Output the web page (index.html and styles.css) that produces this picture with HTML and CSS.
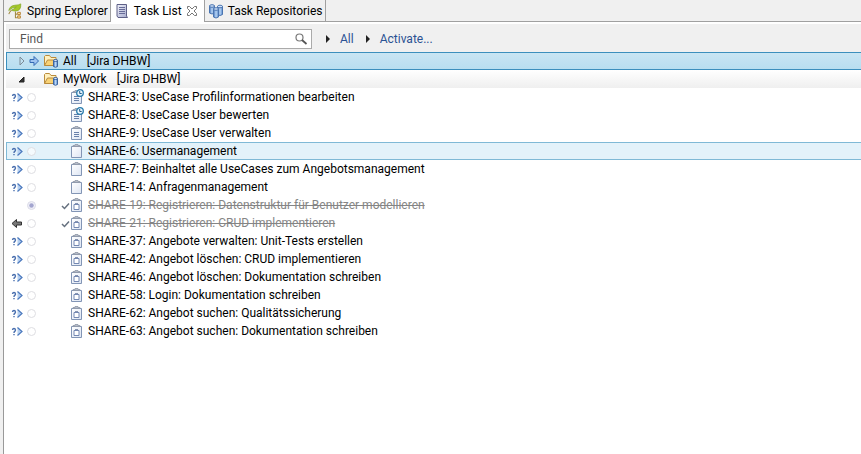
FILE: index.html
```html
<!DOCTYPE html>
<html lang="de">
<head>
<meta charset="utf-8">
<title>Task List</title>
<link rel="stylesheet" href="styles.css">
</head>
<body>
<svg class="defs" aria-hidden="true">
  <defs>
    <linearGradient id="blue" x1="0" y1="0" x2="1" y2="0"><stop offset="0" stop-color="#3f72bd"/><stop offset=".5" stop-color="#b9d6f5"/><stop offset="1" stop-color="#5b8bcd"/></linearGradient>
    <linearGradient id="paper" x1="0" y1="0" x2="1" y2="1"><stop offset="0" stop-color="#fff"/><stop offset="1" stop-color="#dde5f3"/></linearGradient>
    <linearGradient id="violet" x1="0" y1="0" x2="1" y2="1"><stop offset="0" stop-color="#f2f3fb"/><stop offset="1" stop-color="#a3a8cb"/></linearGradient>
    <symbol id="incoming" viewBox="0 0 12 12">
      <path d="M1.500 5Q1.700 3.500 3 3.500T4.500 5Q4.500 6 3.500 6.500Q3 7 3 8M3 9v1.300" fill="none" stroke="#4a6fae" stroke-width="1.400"/>
      <path d="M6.500 2.500L11 6.500l-4.500 4Z" fill="#b5cff0"/>
      <path d="M6.500 2.500L11 6.500l-4.500 4" fill="none" stroke="#4a78bd" stroke-width="1.200"/>
    </symbol>
    <symbol id="outgoing" viewBox="0 0 12 12">
      <path d="M1 6.500l4.500-4v2.500h5v3h-5v2.500Z" fill="#777" stroke="#333"/>
    </symbol>
    <symbol id="dot" viewBox="0 0 12 12"><circle cx="5.500" cy="6.500" r="4" fill="#fff" fill-opacity=".6" stroke="#dedee2"/></symbol>
    <symbol id="dot-on" viewBox="0 0 12 12"><circle cx="5.500" cy="6.500" r="4" fill="#f0f0f8" stroke="#dcdce8"/><circle cx="5.500" cy="6.500" r="2.200" fill="#a3a5cf"/></symbol>
    <symbol id="check" viewBox="0 0 9 12"><path d="M1 7l2.500 2.500L8 4.500" fill="none" stroke="#66717f" stroke-width="1.500"/></symbol>
    <symbol id="task" viewBox="0 0 14 16">
      <path d="M1.500 3.500h10v11h-10Z" fill="url(#paper)" stroke="#8295b5"/>
      <path d="M3 3.500v-1h2v-1h3v1h2v1Z" fill="#b9bec8" stroke="#8e98a8" stroke-width=".8"/>
    </symbol>
    <symbol id="story" viewBox="0 0 14 16">
      <use href="#task"/><path d="M4 7.500h5M4 9.500h5M4 11.500h5" stroke="#6880aa"/>
    </symbol>
    <symbol id="due" viewBox="0 0 14 16">
      <use href="#story"/><circle cx="10" cy="4" r="3.300" fill="#e7f4fc" stroke="#287bad" stroke-width="1.300"/><path d="M9.700 2v2.500h2" fill="none" stroke="#245d8a"/>
    </symbol>
    <symbol id="subtask" viewBox="0 0 14 16">
      <use href="#task"/><path d="M4 7.500h5v5H4Z" fill="#fff" stroke="#7488b2"/><path d="M5 6.500h3" stroke="#8794b0"/>
    </symbol>
    <symbol id="folder" viewBox="0 0 16 16">
      <path d="M1.500 12.500v-9l1-1h4l1.500 2h5v3" fill="#fff0bd" stroke="#b98b3c"/>
      <path d="M1.500 12.500l3-5.500h10l-2.500 5.500Z" fill="#f8d276" stroke="#b98b3c"/>
      <path d="M10.500 7.500v6q2 1.500 4 0v-6Z" fill="url(#blue)" stroke="#3d65a0"/><ellipse cx="12.500" cy="7.500" rx="2" ry="1" fill="#d5e6fb" stroke="#3d65a0"/>
    </symbol>
    <symbol id="arrow" viewBox="0 0 12 12"><path d="M2 4.500h4v-3l4.500 4.500-4.500 4.500v-3h-4Z" fill="#9fc4f0" stroke="#3369b3"/></symbol>
    <symbol id="closed" viewBox="0 0 10 12"><path d="M3 2l4 4-4 4Z" fill="none" stroke="#7d8b96"/></symbol>
    <symbol id="open" viewBox="0 0 10 12"><path d="M7 4v5H2Z" fill="#333" stroke="#222"/></symbol>
    <symbol id="spring" viewBox="0 0 16 18">
      <path d="M1 8.500Q2 3 8 2.500Q12 2.500 14.500 1Q15 9 8.500 9Q5 9 4 8Q7 7 9.500 4.500Q4 5 1 8.500Z" fill="#a5c928" stroke="#80a524" stroke-width=".8"/>
      <path d="M4 8Q2 10 1 12.500M8.500 9.500v7h2M8.500 12.500h2" fill="none" stroke="#a08a45" stroke-width="1.200"/>
      <path d="M11 10.500h3v2.500h-3ZM11 14.500h3v2.500h-3Z" fill="#ffe6a0" stroke="#b17a28"/>
    </symbol>
    <symbol id="list" viewBox="0 0 14 16">
      <path d="M2 1.500h9.500v11.500l1 1.500H3L2 13Z" fill="url(#violet)" stroke="#5e6087"/>
      <path d="M4 4.500h6M4 6.500h6M4 8.500h6M4 10.500h6" stroke="#686c98"/>
    </symbol>
    <symbol id="close" viewBox="0 0 12 12"><path d="M1.500 1.500h2L6 4l2.500-2.500h2v2L8 6l2.500 2.500v2h-2L6 8l-2.500 2.500h-2v-2L4 6 1.500 3.500Z" fill="#fff" stroke="#777"/></symbol>
    <symbol id="repos" viewBox="0 0 16 16">
      <g fill="url(#blue)" stroke="#4a74b0">
        <path d="M1.500 3v7q2.500 2 5 0V3Z"/><ellipse cx="4" cy="3" rx="2.500" ry="1.300" fill="#cfe1f8"/>
        <path d="M9.500 3.500v8q2.500 2 5 0v-8Z"/><ellipse cx="12" cy="3.500" rx="2.500" ry="1.300" fill="#cfe1f8"/>
        <path d="M5.500 6v8q2.500 2 5 0V6Z"/><ellipse cx="8" cy="6" rx="2.500" ry="1.300" fill="#cfe1f8"/>
      </g>
    </symbol>
    <symbol id="search" viewBox="0 0 14 14"><circle cx="5.500" cy="5.500" r="3.500" fill="#fff" stroke="#777" stroke-width="1.200"/><path d="M8 8l4.500 4" stroke="#555" stroke-width="1.700"/></symbol>
    <symbol id="tri" viewBox="0 0 6 10"><path d="M1 1l4 4-4 4Z" fill="#222"/></symbol>
  </defs>
</svg>
<div class="view">
  <nav class="tabs">
    <button class="tab"><svg class="icon16"><use href="#spring"/></svg>Spring Explorer</button>
    <button class="tab active"><svg class="icon16"><use href="#list"/></svg>Task List<svg class="icon12 close"><use href="#close"/></svg></button>
    <button class="tab"><svg class="icon16"><use href="#repos"/></svg>Task Repositories</button>
  </nav>
  <main class="panel">
    <form class="toolbar">
      <label class="find"><input type="text" placeholder="Find" aria-label="Find"><svg class="icon14"><use href="#search"/></svg></label>
      <svg class="tri"><use href="#tri"/></svg><a href="#">All</a>
      <svg class="tri"><use href="#tri"/></svg><a href="#">Activate...</a>
    </form>
    <ul class="tree">
      <li class="group selected"><svg class="twist"><use href="#closed"/></svg><svg class="icon12"><use href="#arrow"/></svg><svg class="icon16"><use href="#folder"/></svg><span>All</span><span>[Jira DHBW]</span></li>
      <li class="group"><svg class="twist"><use href="#open"/></svg><i class="icon12"></i><svg class="icon16"><use href="#folder"/></svg><span>MyWork</span><span>[Jira DHBW]</span></li>
      <li class="task"><svg class="icon12"><use href="#incoming"/></svg><svg class="icon12"><use href="#dot"/></svg><i></i><svg class="doc"><use href="#due"/></svg><span>SHARE-3: UseCase Profilinformationen bearbeiten</span></li>
      <li class="task"><svg class="icon12"><use href="#incoming"/></svg><svg class="icon12"><use href="#dot"/></svg><i></i><svg class="doc"><use href="#due"/></svg><span>SHARE-8: UseCase User bewerten</span></li>
      <li class="task"><svg class="icon12"><use href="#incoming"/></svg><svg class="icon12"><use href="#dot"/></svg><i></i><svg class="doc"><use href="#story"/></svg><span>SHARE-9: UseCase User verwalten</span></li>
      <li class="task hover"><svg class="icon12"><use href="#incoming"/></svg><svg class="icon12"><use href="#dot"/></svg><i></i><svg class="doc"><use href="#task"/></svg><span>SHARE-6: Usermanagement</span></li>
      <li class="task"><svg class="icon12"><use href="#incoming"/></svg><svg class="icon12"><use href="#dot"/></svg><i></i><svg class="doc"><use href="#task"/></svg><span>SHARE-7: Beinhaltet alle UseCases zum Angebotsmanagement</span></li>
      <li class="task"><svg class="icon12"><use href="#incoming"/></svg><svg class="icon12"><use href="#dot"/></svg><i></i><svg class="doc"><use href="#task"/></svg><span>SHARE-14: Anfragenmanagement</span></li>
      <li class="task done"><i></i><svg class="icon12"><use href="#dot-on"/></svg><svg class="check"><use href="#check"/></svg><svg class="doc"><use href="#subtask"/></svg><span>SHARE-19: Registrieren: Datenstruktur für Benutzer modellieren</span></li>
      <li class="task done"><svg class="icon12"><use href="#outgoing"/></svg><svg class="icon12"><use href="#dot"/></svg><svg class="check"><use href="#check"/></svg><svg class="doc"><use href="#subtask"/></svg><span>SHARE-21: Registrieren: CRUD implementieren</span></li>
      <li class="task"><svg class="icon12"><use href="#incoming"/></svg><svg class="icon12"><use href="#dot"/></svg><i></i><svg class="doc"><use href="#subtask"/></svg><span>SHARE-37: Angebote verwalten: Unit-Tests erstellen</span></li>
      <li class="task"><svg class="icon12"><use href="#incoming"/></svg><svg class="icon12"><use href="#dot"/></svg><i></i><svg class="doc"><use href="#subtask"/></svg><span>SHARE-42: Angebot löschen: CRUD implementieren</span></li>
      <li class="task"><svg class="icon12"><use href="#incoming"/></svg><svg class="icon12"><use href="#dot"/></svg><i></i><svg class="doc"><use href="#subtask"/></svg><span>SHARE-46: Angebot löschen: Dokumentation schreiben</span></li>
      <li class="task"><svg class="icon12"><use href="#incoming"/></svg><svg class="icon12"><use href="#dot"/></svg><i></i><svg class="doc"><use href="#subtask"/></svg><span>SHARE-58: Login: Dokumentation schreiben</span></li>
      <li class="task"><svg class="icon12"><use href="#incoming"/></svg><svg class="icon12"><use href="#dot"/></svg><i></i><svg class="doc"><use href="#subtask"/></svg><span>SHARE-62: Angebot suchen: Qualitätssicherung</span></li>
      <li class="task"><svg class="icon12"><use href="#incoming"/></svg><svg class="icon12"><use href="#dot"/></svg><i></i><svg class="doc"><use href="#subtask"/></svg><span>SHARE-63: Angebot suchen: Dokumentation schreiben</span></li>
    </ul>
  </main>
</div>
</body>
</html>
```
FILE: styles.css
```css
* { box-sizing: border-box; }
body {
  margin: 0;
  background: #f0f0f0;
  color: #000;
  font: 12px/18px Roboto, "Open Sans", sans-serif;
}
svg { display: block; flex: none; }
.defs { position: absolute; width: 0; height: 0; }
.icon12 { width: 12px; height: 12px; }
.icon14 { width: 14px; height: 14px; }
.icon16 { width: 16px; height: 16px; }

.view {
  display: flex;
  flex-direction: column;
  min-height: 100vh;
  margin-left: 3px;
  border-left: 1px solid #999;
}
.tabs {
  display: flex;
  height: 22px;
  border-bottom: 1px solid #a0a0a0;
}
.tab {
  display: flex;
  align-items: center;
  gap: 4px;
  height: 21px;
  padding: 0 2px 0 3px;
  border: 0;
  border-right: 1px solid #a0a0a0;
  background: none;
  color: inherit;
  font: inherit;
  white-space: nowrap;
}
.tab.active { height: 22px; background: #fff; }
.close { margin-right: 4px; }

.panel {
  flex: 1;
  padding: 2px 0 0 2px;
  background: #fff;
}
.toolbar {
  display: flex;
  align-items: center;
  height: 28px;
  padding: 2px 3px 0;
  background: #f0f0f0;
}
.find {
  display: flex;
  align-items: center;
  width: 303px;
  height: 20px;
  margin-right: 13px;
  padding: 0 3px 0 10px;
  border: 1px solid #aaa;
  background: #fff;
}
.find input {
  flex: 1;
  min-width: 0;
  padding: 0;
  border: 0;
  outline: 0;
  background: none;
  font: inherit;
}
.find input::placeholder { color: #555; opacity: 1; }
.tri { width: 6px; height: 10px; margin-right: 9px; }
.toolbar a { margin-right: 11px; color: #2b5293; text-decoration: none; }

.tree { margin: 0; padding: 0; list-style: none; }
.group, .task {
  height: 18px;
  padding-left: 4px;
  border: solid transparent;
  border-width: 1px 0 1px 1px;
  line-height: 16px;
  white-space: nowrap;
}
.group {
  display: flex;
  align-items: center;
  padding-left: 10px;
  background: linear-gradient(#fff, #efefef) border-box;
}
.twist { width: 10px; height: 12px; margin-right: 1px; }
.group .icon16 { margin: 0 4px 0 3px; }
.group span { margin-right: 10px; }
.group.selected { background: linear-gradient(#c9e5f3, #b8def0); border-color: #3c8fbd; }
.task {
  display: grid;
  grid-template-columns: 15px 35px 9px 18px 1fr;
  align-items: center;
}
.check { width: 9px; height: 12px; }
.doc { width: 14px; height: 16px; }
.hover { background: #e3f2fa; border-color: #7fb9d6; }
.done { color: #858585; }
.done span { text-decoration: line-through; }
```
